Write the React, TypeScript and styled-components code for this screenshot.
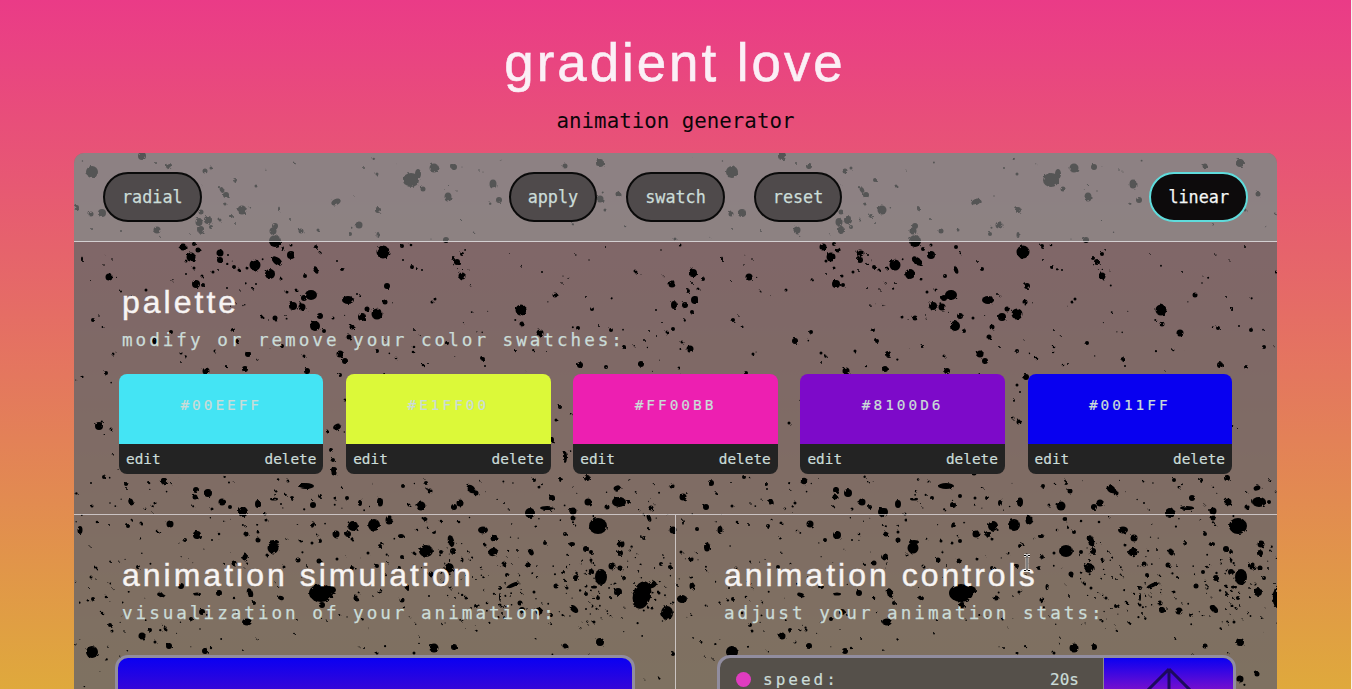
import React from "react";
import styled, { createGlobalStyle } from "styled-components";

const Global = createGlobalStyle`
  html, body { margin: 0; padding: 0; height: 689px; overflow: hidden; background: #f4f1ee; }
  #root { width: 1351px; height: 689px; overflow: hidden; }
`;

const mono = `"DejaVu Sans Mono", monospace`;
const sans = `"Liberation Sans", Arial, sans-serif`;
const ink = "#cbdcd8";

const Page = styled.div`
  position: relative;
  width: 1351px;
  height: 689px;
  overflow: hidden;
  background: linear-gradient(180deg, #ea3b87 0%, #dfa93c 100%);
`;
const Header = styled.header`
  height: 153px;
  display: flex;
  flex-direction: column;
  align-items: center;
  box-sizing: border-box;
  padding-top: 33px;
`;
const Title = styled.h1`
  margin: 0 0 0 -1px;
  font: 400 52.8px/60px ${sans};
  letter-spacing: 3px;
  color: #fbeff6;
  -webkit-text-stroke: 0.6px #fbeff6;
`;
const Tagline = styled.p`
  margin: 15px 0 0;
  font: 400 20.8px/26px ${mono};
  color: #0d0509;
`;
const Panel = styled.main`
  position: relative;
  width: 1203px;
  margin: 0 auto;
  height: 700px;
  border-radius: 10px 10px 0 0;
  overflow: hidden;
  background: rgba(109, 103, 103, 0.85);
`;
const Texture = styled.svg`
  position: absolute;
  left: 0;
  top: 0;
`;
const Content = styled.div`
  position: relative;
`;
const Toolbar = styled.nav`
  height: 88px;
  display: flex;
  align-items: center;
  justify-content: space-between;
  padding: 0 29px;
  border-bottom: 1px solid rgba(235, 232, 235, 0.75);
  background: rgba(152, 152, 152, 0.56);
`;
const ButtonGroup = styled.div`
  display: flex;
  gap: 29px;
`;
const Pill = styled.button<{ $active?: boolean }>`
  height: 50px;
  padding: 0 17px;
  box-sizing: border-box;
  border-radius: 25px;
  border: 2px solid ${(p) => (p.$active ? "#5fdcdc" : "#0a0a0a")};
  background: ${(p) => (p.$active ? "#0d0b0c" : "#4f4a4b")};
  color: ${(p) => (p.$active ? "#f4f6f6" : ink)};
  font: 400 16.8px/46px ${mono};
  -webkit-text-stroke: 0.25px ${(p) => (p.$active ? "#f4f6f6" : ink)};
`;
const Section = styled.section`
  padding: 41px 45px 40px;
  border-bottom: 1px solid rgba(235, 232, 235, 0.7);
`;
const Heading = styled.h2`
  margin: 0 0 0 3px;
  font: 400 32px/38px ${sans};
  letter-spacing: 3px;
  color: #f7f4f3;
  -webkit-text-stroke: 0.4px #f7f4f3;
`;
const Sub = styled.p`
  margin: 9px 0 0 3px;
  font: 400 17.6px/20px ${mono};
  letter-spacing: 3px;
  color: ${ink};
  -webkit-text-stroke: 0.25px ${ink};
`;
const Cards = styled.div`
  display: flex;
  gap: 22.7px;
  margin-top: 24px;
`;
const Card = styled.article`
  flex: 1;
  border-radius: 8px;
  overflow: hidden;
`;
const Swatch = styled.div<{ $color: string }>`
  height: 70px;
  background: ${(p) => p.$color};
  text-align: center;
  font: 400 14.4px/62px ${mono};
  letter-spacing: 3px;
  color: ${ink};
  -webkit-text-stroke: 0.2px ${ink};
`;
const CardBar = styled.div`
  height: 30px;
  display: flex;
  justify-content: space-between;
  align-items: center;
  padding: 0 7px;
  background: #232323;
  font: 400 14.4px/30px ${mono};
  color: ${ink};
  -webkit-text-stroke: 0.2px ${ink};
`;
const Split = styled.div`
  display: grid;
  grid-template-columns: 602px 601px;
`;
const Column = styled.section<{ $divider?: boolean }>`
  box-sizing: border-box;
  height: 400px;
  padding: 41px 40px 0 48px;
  ${(p) => p.$divider && "border-right: 1px solid rgba(235, 232, 235, 0.7);"}
`;
const ColHeading = styled(Heading)`
  margin-left: 0;
`;
const ColSub = styled(Sub)`
  margin-left: 0;
`;
const SimBox = styled.div`
  margin: 32px 0 0 -7px;
  width: 520px;
  height: 300px;
  box-sizing: border-box;
  border: 3px solid #918d9f;
  border-radius: 13px;
  background: linear-gradient(180deg, #0a00f2 0, #3506d8 31px, #8100d6 110px);
`;
const ControlBox = styled.div`
  margin: 32px 0 0 -7px;
  width: 519px;
  height: 300px;
  box-sizing: border-box;
  border: 3px solid #918d9f;
  border-radius: 13px;
  overflow: hidden;
  display: flex;
  background: #55504a;
`;
const Rows = styled.div`
  flex: 1;
  padding: 0 24px 0 16px;
`;
const Row = styled.div`
  display: flex;
  align-items: center;
  height: 43px;
  font: 400 16px/43px ${mono};
  color: ${ink};
  -webkit-text-stroke: 0.2px ${ink};
`;
const Dot = styled.span`
  width: 15px;
  height: 15px;
  border-radius: 50%;
  background: #e03cc0;
  margin-right: 12px;
`;
const RowLabel = styled.span`
  flex: 1;
  letter-spacing: 3px;
`;
const Preview = styled.div`
  width: 130px;
  flex: none;
  box-sizing: border-box;
  border-left: 1px solid #8b8790;
  background: linear-gradient(180deg, #0a00f2 0px, #7a10cc 33px, #d81ea8 110px);
`;
const PreviewIcon = styled.svg`
  display: block;
`;
const Cursor = styled.svg`
  position: absolute;
  left: 1021px;
  top: 554px;
`;

// [x, y, rx, ry?, rotation?] in page coordinates; the tile repeats every 640px.
type B = [number, number, number, number?, number?];
const blobs: B[] = [
  [92,172,6],[142,156,4],[169,166,3],[205,171,2.5],[156,163,1],[211,168,1.5],[235,180,2],[256,186,1.5],[222,190,2,3,-30],[226,195,3],[225,204,1.5],[242,210,4.5],[231,216,2],[235,223,1],[220,220,1.5],[208,220,4],[199,222,3.5,4],[201,230,3,4],[211,227,2],[201,212,2.5],[91,214,2.5],[102,213,4],[77,208,2,3],[157,230,3.5],[121,231,1],[92,229,1],[279,209,1,2.5],[275,226,3],[273,231,3.5],[275,241,6],[301,231,2.5],[318,230,1.5],[290,219,1],[336,202,5,3,-25],[378,210,3],[359,225,3.5],[350,234,2],[378,235,1.5,3],[377,174,1.5],[364,168,1],[354,196,.7],
  [183,247,3.5],[198,250,2.5],[194,244,2],[191,257,4.5],[186,261,1.5],[220,253,3.5],[220,260,3],[228,255,1],[234,267,2],[239,270,1.5],[247,268,1.5],[255,265,5.5],[270,274,5],[277,261,6,3.5,40],[291,255,4],[283,249,2],[291,245,1.5],[316,247,2],[316,270,2,4,-20],[305,276,2],[281,279,1.5],[342,269,2],[337,261,1],[383,252,6.5],[82,259,1,2.5],[109,277,3.5],[112,259,.8],[104,265,.8],[194,268,1.5],[213,272,1.5],[218,270,1],[186,274,1],[196,284,4],[203,285,2],[202,276,1.5],[146,290,1.5],[227,288,1],[240,290,.8],[256,284,1],[287,292,1.5],[296,290,1.5],[311,295,6,5],[304,298,3],[293,306,4],[302,307,3.5],[348,300,6,4],[357,294,1],[367,309,2.5],[362,317,4],[377,314,5.5],[385,302,2.5],[387,286,3],[320,316,3],[315,326,5],[333,318,1.5],[352,327,2.5],[349,337,2.5],[275,318,2.5],[262,317,1.5],[233,330,2],[93,320,2],[99,316,.8],[171,332,2],[155,341,3],[248,354,3],[113,354,1.5],[340,354,3.5],[345,361,3],[206,371,3.5],[245,369,3],[307,371,3],[106,373,2],[282,346,2],[304,356,1.5],[377,351,2],[359,347,1],[215,351,1.5],[181,353,1.5],[237,341,2],[324,331,2],
  [434,168,4.5],[411,180,8,7],[418,174,3,5],[454,167,3],[423,189,2.5],[448,197,3.5,4.5],[493,184,3.5,4.5],[499,200,3],[600,199,3.5],[605,210,1.5],[618,194,2.5],[565,166,2.5],[600,163,4],[446,240,3],[675,239,1.5],[479,170,.8],[483,172,.6],[457,191,.7],[462,167,.5],[431,239,.6],
  [402,246,2],[411,245,1.3],[462,254,2],[453,258,2],[457,262,3],[462,276,3.5],[412,267,2],[422,270,1],[403,260,1],[469,270,.6],[542,272,1],[605,247,1],[661,250,.8],[680,245,1.5],[636,272,1.5],[693,273,4],[703,279,2],[672,284,3.5],[692,283,1],[688,291,2],[698,289,1.5],[695,300,4],[685,305,3],[674,305,3,4],[692,312,2],[656,310,1],[555,295,2.5],[562,283,.8],[563,276,.6],[586,297,1],[592,309,2],[435,299,1.5],[432,302,1.5],[521,310,5.5],[522,324,2.5],[540,333,3.5],[578,328,2],[611,330,2],[599,326,1],[673,329,2],[667,332,1.5],[657,336,1],[624,347,2],[682,342,1.5],[690,349,3.5],[483,359,2],[580,365,3],[606,367,2],[641,364,3],[679,368,1.5],[423,365,1.3],[428,364,1],[414,347,1.3],[413,352,1.3],[447,343,2],[396,358,1.3],[414,330,1],[485,366,1],[644,340,1],[662,322,1],[649,331,1],
  [99,426,4],[111,429,1.5],[337,427,4,3,-30],[331,450,2],[334,470,3],[333,460,2],[327,431,1.5],[565,457,2,6],[377,385,1.5],[386,377,3],[380,392,1],[374,400,1,2],[379,422,2.5],[373,418,1.5],[149,423,1.5],[560,407,2],[552,440,2,3],[556,420,1.5],[340,375,2],[345,400,1.5],
  [164,481,3.2],[104,477,2],[91,483,1],[126,484,2],[127,489,1],[131,502,2.5,3.5,-20],[155,503,1.5],[196,490,3],[195,497,2.5],[208,493,4],[222,502,3.5],[230,507,2],[212,509,1.5],[243,512,5],[258,504,3,4],[274,499,4,1.5],[281,504,1],[265,514,1.5],[266,520,1.5],[288,481,1.5],[306,486,8,3],[320,496,2],[292,498,2],[313,505,3],[334,473,2.5],[335,498,1.5],[347,498,2],[360,503,2,3],[380,502,3,4.5],[92,506,1.5],[110,503,.8],
  [80,530,2.5,4],[97,522,1.3],[109,525,1],[128,526,2],[141,523,1.5],[170,524,3.5],[157,531,1.3],[197,535,4],[185,540,2],[219,534,1.3],[212,540,1],[246,534,2.5],[258,532,1.5],[258,540,2.5],[273,548,5.5],[274,542,5,2],[245,557,2.5,3.5,30],[234,563,2.5],[267,555,1.5],[313,525,1.5,3,30],[353,526,5],[336,534,3.5],[348,534,3],[374,525,6],[389,520,3.5,4.5],[352,539,1.5],[380,546,2],[368,553,1.5],[312,543,1.5],[320,541,2],[301,541,1.5],[298,560,2.5],[319,561,2.5],[337,559,1.5],[377,566,2],[352,568,2],[284,567,1.5],[138,567,2],[96,568,1.5],[91,577,1.5],[89,588,1],[93,599,2],[106,597,1.3],[181,586,3],[161,595,4,2,20],[197,594,4,1.5],[219,593,3],[250,593,3,5,-20],[281,598,3,2,20],[321,593,12,9],[330,590,6,4],[356,598,2.5],[379,592,1.5],[322,605,3],[254,603,2],[234,598,1.3],[202,612,3],[247,622,5,3.5],[191,619,2],[102,613,1.3],[110,625,2],[112,631,1.5],[142,636,3.5],[150,630,2],[166,630,1.5],[169,646,3],[155,642,1.5],[92,652,6],[205,651,3],[211,648,1.2],[124,631,.8],[200,629,.8],[377,653,1.5],[364,648,1],
  [403,486,2],[426,483,2],[430,491,2.5],[471,489,5,3.5,40],[476,493,2.5],[421,506,4.5],[409,505,1.5],[460,503,3.5],[454,507,3],[534,480,2],[539,487,1.5],[561,480,2],[587,478,3],[588,502,3.5],[552,498,3],[547,508,7,2],[530,513,5],[573,511,3.5],[573,518,2.5],[617,488,3.5,2.5,-20],[619,502,7,5],[629,502,2],[607,507,2.5],[651,508,2.5],[672,486,2.5],[683,497,3.5],[706,507,3],[711,483,3],[504,503,1],[569,510,1],
  [425,519,2.5,2],[441,521,1.3],[459,522,1.3],[417,530,1.3],[434,532,2],[401,536,3,2],[483,530,5,3.5],[494,538,3.5],[451,541,3,6,-15],[453,551,3],[426,551,7,6],[441,552,2],[414,553,1.5],[402,557,2],[493,552,5,4,-20],[485,545,1.5],[531,552,2.5,3.5,-25],[517,550,1],[545,543,2],[565,534,2],[572,544,3,2],[586,549,3],[591,552,2],[598,526,9,8],[621,544,3.5],[620,553,3],[591,560,1.5],[673,530,3.5],[649,518,2,4,-20],[683,522,1,3],[697,529,2],[644,538,2],[681,552,1.5],[707,547,3,4.5],[691,559,2.5],[601,577,6,8],[612,566,3.5],[620,568,2.5],[591,572,3],[576,578,3],[563,572,2],[504,564,2.5],[528,565,2.5],[507,575,2],[513,585,7,2,-25],[500,588,2],[500,597,1,4],[520,603,2.5],[466,598,1.5],[449,568,4.5,5,35],[462,560,1.5,2.5],[451,588,1.5],[444,583,1.5],[472,577,1],[431,574,2.5],[402,600,2.5],[407,587,1.5,3],[399,568,2],[429,596,1],[556,586,2.5],[534,592,1.5],[567,588,1.5],[586,586,1.5],[594,587,3,1.5],[586,594,2],[598,598,2],[618,592,4],[615,584,1.5],[624,578,2],[634,583,1],[642,595,9,14,15],[652,585,5,3,-25],[667,613,6,7],[682,599,5,4],[692,586,2.5,3.5],[691,577,1.5],[677,585,1],[661,564,2],[670,567,2],[628,568,1],[574,609,5,3,40],[592,606,1.5],[594,622,1.5],[586,609,1],[652,608,1.5],[434,648,4.5],[454,647,3],[565,646,2.5],[600,642,4],[673,654,2],[659,593,1.5],[414,653,1.5],[522,610,3],[539,611,3.5],[551,615,2],[476,606,2],[487,603,1.3],[500,605,1.5],[502,613,1],[600,679,3.5],[617,674,2.5]
];

function specks(): B[] {
  let s = 73921;
  const r = () => ((s = (s * 16807) % 2147483647) / 2147483647);
  const out: B[] = [];
  const band = (n: number, x0: number, x1: number, y0: number, y1: number) => {
    for (let i = 0; i < n; i++) out.push([x0 + r() * (x1 - x0), y0 + r() * (y1 - y0), 0.4 + r() * 0.8]);
  };
  band(30, 74, 714, 155, 240);
  band(130, 74, 714, 242, 480);
  band(220, 74, 714, 478, 640);
  band(130, 440, 714, 550, 625);
  band(40, 74, 714, 630, 689);
  return out;
}

const all = [...blobs, ...specks()];

function Splatter() {
  return (
    <Texture width={1203} height={600} viewBox="74 153 1203 600" aria-hidden="true">
      <defs>
        <pattern id="splat" patternUnits="userSpaceOnUse" x={74} y={153} width={640} height={600}>
          <g transform="translate(-74 -153)">
            {all.map(([x, y, rx, ry, rot], i) => (
              <ellipse
                key={i}
                cx={x}
                cy={y}
                rx={rx}
                ry={ry ?? rx}
                transform={rot ? `rotate(${rot} ${x} ${y})` : undefined}
                fill="#000"
              />
            ))}
          </g>
        </pattern>
        <filter id="rough" filterUnits="userSpaceOnUse" x={74} y={153} width={1203} height={600}>
          <feTurbulence type="fractalNoise" baseFrequency="0.3" numOctaves={2} seed={4} />
          <feDisplacementMap in="SourceGraphic" scale={3.4} />
        </filter>
      </defs>
      <rect x={74} y={153} width={1203} height={600} fill="url(#splat)" filter="url(#rough)" />
    </Texture>
  );
}

const swatches = [
  ["#00EEFF", "#44e4f4"],
  ["#E1FF00", "#dcf939"],
  ["#FF00BB", "#ed1fb1"],
  ["#8100D6", "#7d0ac9"],
  ["#0011FF", "#0800f0"],
];

export default function App() {
  return (
    <Page>
      <Global />
      <Header>
        <Title>gradient love</Title>
        <Tagline>animation generator</Tagline>
      </Header>
      <Panel>
        <Splatter />
        <Content>
          <Toolbar>
            <Pill>radial</Pill>
            <ButtonGroup>
              <Pill>apply</Pill>
              <Pill>swatch</Pill>
              <Pill>reset</Pill>
            </ButtonGroup>
            <Pill $active>linear</Pill>
          </Toolbar>
          <Section>
            <Heading>palette</Heading>
            <Sub>modify or remove your color swatches:</Sub>
            <Cards>
              {swatches.map(([hex, shown]) => (
                <Card key={hex}>
                  <Swatch $color={shown}>{hex}</Swatch>
                  <CardBar>
                    <span>edit</span>
                    <span>delete</span>
                  </CardBar>
                </Card>
              ))}
            </Cards>
          </Section>
          <Split>
            <Column $divider>
              <ColHeading>animation simulation</ColHeading>
              <ColSub>visualization of your animation:</ColSub>
              <SimBox />
            </Column>
            <Column>
              <ColHeading>animation controls</ColHeading>
              <ColSub>adjust your animation stats:</ColSub>
              <ControlBox>
                <Rows>
                  <Row>
                    <Dot />
                    <RowLabel>speed:</RowLabel>
                    <span>20s</span>
                  </Row>
                </Rows>
                <Preview>
                  <PreviewIcon width="129" height="60" viewBox="0 0 129 60" fill="none" stroke="#1c0a5e" strokeWidth="3">
                    <path d="M65 11 V60 M65 11 L15 61 M65 11 L115 61" />
                  </PreviewIcon>
                </Preview>
              </ControlBox>
            </Column>
          </Split>
        </Content>
      </Panel>
      <Cursor width="12" height="18" viewBox="0 0 12 18" aria-hidden="true">
        <path d="M3 1.5 H5 L6 2.5 L7 1.5 H9 M6 2.5 V15.5 M3 16.5 H5 L6 15.5 L7 16.5 H9" stroke="#fff" strokeWidth="2.6" fill="none" />
        <path d="M3 1.5 H5 L6 2.5 L7 1.5 H9 M6 2.5 V15.5 M3 16.5 H5 L6 15.5 L7 16.5 H9" stroke="#000" strokeWidth="1" fill="none" />
      </Cursor>
    </Page>
  );
}
